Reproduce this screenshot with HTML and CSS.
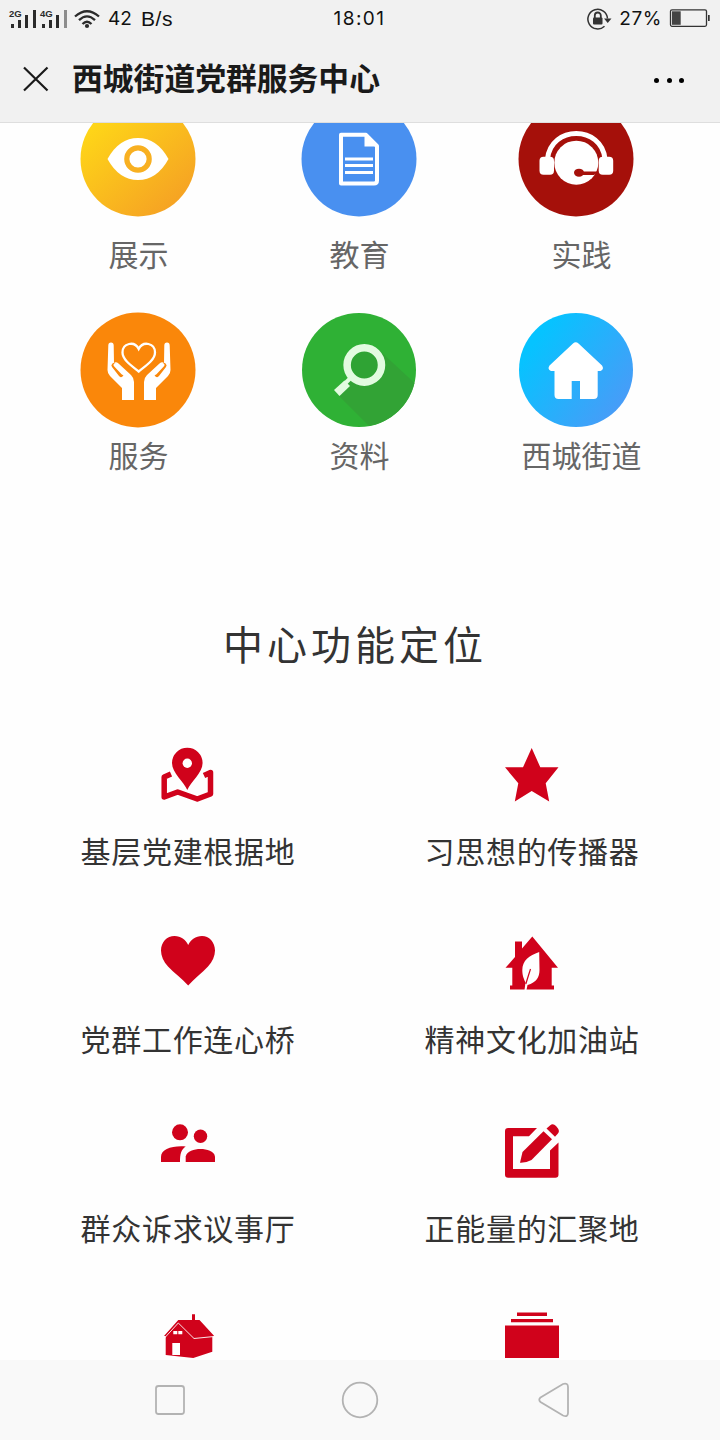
FILE: index.html
```
<!DOCTYPE html>
<html lang="zh-CN">

<head>
    <meta charset="UTF-8">
    <meta name="viewport" content="width=device-width, initial-scale=1.0">
    <title>西城街道党群服务中心</title>
    <link rel="stylesheet" href="styles.css">
</head>

<body>
    <div class="status-bar">
        <div class="status-left">
            <svg class="signal" width="92" height="22" viewBox="0 0 92 22">
                <g fill="#2b2b2b">
                    <text x="0" y="9" class="net">2G</text>
                    <rect x="2" y="16" width="3" height="4" />
                    <rect x="9" y="12" width="3" height="8" />
                    <rect x="16" y="7" width="3" height="13" />
                    <rect x="24" y="2" width="3" height="18" />
                    <text x="31" y="9" class="net">4G</text>
                    <rect x="33" y="16" width="3" height="4" />
                    <rect x="40" y="12" width="3" height="8" />
                    <rect x="47" y="7" width="3" height="13" />
                    <rect x="55" y="2" width="3" height="18" fill="#8d8d8d" />
                </g>
                <g fill="none" stroke="#2b2b2b" stroke-width="2.3">
                    <path d="M66 8.500Q78 -2 90 8.500" />
                    <path d="M70 12.200Q78 4.500 86 12.200" />
                    <path d="M73.500 16Q78 11.500 82.500 16" />
                </g>
                <circle cx="78" cy="18" r="2.100" fill="#2b2b2b" />
            </svg>
            <span class="speed">42</span>
            <span class="unit">B/s</span>
        </div>
        <span class="clock">18:01</span>
        <div class="status-right">
            <svg width="25" height="22" viewBox="0 0 25 22">
                <path d="M17.500 18.200A9.800 9.800 0 1 1 20.500 10.500" fill="none" stroke="#333" stroke-width="1.500" />
                <path d="M17 10.500h7.500L20.700 15z" fill="#333" />
                <rect x="6" y="9.500" width="9.500" height="7" rx="1" fill="#333" />
                <path d="M7.800 10V7.500a3 3 0 0 1 6 0V10" fill="none" stroke="#333" stroke-width="1.800" />
            </svg>
            <span class="percent">27%</span>
            <svg width="41" height="19" viewBox="0 0 41 19">
                <rect x="1.500" y=".800" width="36" height="16.500" rx="1.500" fill="none" stroke="#333" stroke-width="1.300" />
                <rect x="3" y="2.300" width="8.700" height="13.500" fill="#444" />
                <rect x="39" y="6" width="1.700" height="6" fill="#333" />
            </svg>
        </div>
    </div>

    <header class="title-bar">
        <svg class="close" width="26" height="26" viewBox="0 0 26 26">
            <path d="M1 1.500l23.500 23M24.500 1.500l-23.500 23" stroke="#1a1a1a" stroke-width="2.200" />
        </svg>
        <h1>西城街道党群服务中心</h1>
        <div class="more"><i></i><i></i><i></i></div>
    </header>

    <main class="content">
        <div class="menu">
            <div class="menu-item">
                <svg viewBox="0 0 116 116">
                    <defs>
                        <linearGradient id="yellow" x1="0.100" y1="0.100" x2="0.850" y2="0.950">
                            <stop offset="0" stop-color="#ffda17" />
                            <stop offset="1" stop-color="#f5a024" />
                        </linearGradient>
                    </defs>
                    <circle cx="58" cy="58" r="57.500" fill="url(#yellow)" />
                    <path d="M27.500 58Q39 37 58 37T88.500 58Q77 79 58 79T27.500 58z" fill="#fff" />
                    <circle cx="58" cy="58" r="11.200" fill="none" stroke="#f8b021" stroke-width="5.200" />
                </svg>
                <span>展示</span>
            </div>
            <div class="menu-item">
                <svg viewBox="0 0 116 116">
                    <circle cx="58" cy="58" r="57.500" fill="#4990f0" />
                    <path d="M40 33.800h25L76 45v34.500q0 3-3 3H40z" fill="none" stroke="#fff" stroke-width="4" stroke-linejoin="round" />
                    <path d="M63.500 33L77 45.500H63.500z" fill="#fff" />
                    <path d="M44 58h28M44 64.500h28M44 71.500h28" stroke="#fff" stroke-width="3" />
                </svg>
                <span>教育</span>
            </div>
            <div class="menu-item shifted">
                <svg viewBox="0 0 116 116">
                    <circle cx="58" cy="58" r="57.500" fill="#a5100a" />
                    <path d="M29.500 58C33 24 83.500 24 87 58" fill="none" stroke="#fff" stroke-width="5" />
                    <circle cx="58.300" cy="61.700" r="22" fill="#fff" />
                    <rect x="21.500" y="55.700" width="14.500" height="18" rx="4" fill="#fff" />
                    <rect x="80.700" y="55.700" width="14.500" height="18" rx="4" fill="#fff" />
                    <ellipse cx="61" cy="71.700" rx="5" ry="4" fill="#a5100a" />
                    <path d="M61 70.500H80.500L76 74H61z" fill="#a5100a" />
                </svg>
                <span>实践</span>
            </div>
            <div class="menu-item">
                <svg viewBox="0 0 116 116">
                    <circle cx="58" cy="58" r="57.500" fill="#fa870a" />
                    <path d="M58.700 59.500C52 54 42.500 48 42.500 40.500C42.500 31 54.500 28.500 58.700 37C63 28.500 75 31 75 40.500C75 48 65.500 54 58.700 59.500z" fill="none" stroke="#fff" stroke-width="2.300" />
                    <g id="hand" fill="#fff">
                        <path d="M31 30.500q2.700 0 2.700 3L34 51q2-1.500 4.500 .500L51 63q3 3 3 7V88H42V76L30 64q-2.500-2.500-2.500-6L28.300 33.500q0-3 2.700-3z" />
                        <path d="M34 53.500L41 62.500" stroke="#fa870a" stroke-width="5" stroke-linecap="round" />
                        <path d="M35.500 53L43 61" stroke="#fff" stroke-width="4" stroke-linecap="round" />
                    </g>
                    <use href="#hand" transform="translate(118 0) scale(-1 1)" />
                </svg>
                <span>服务</span>
            </div>
            <div class="menu-item">
                <svg viewBox="0 0 116 116">
                    <circle cx="58" cy="58" r="57" fill="#2fb135" />
                    <path d="M78 38L113.500 71A57 57 0 0 1 68 114L38 84L50 68z" fill="#32a335" />
                    <circle cx="63.300" cy="53" r="13.500" fill="#2fa334" />
                    <circle cx="63.300" cy="53" r="17.200" fill="none" stroke="#e2fbe0" stroke-width="7.500" />
                    <path d="M50 65.500L44 71.500" stroke="#e2fbe0" stroke-width="4" />
                    <path d="M43.500 68.500L49 74L38.500 84L33 78z" fill="#e2fbe0" />
                </svg>
                <span>资料</span>
            </div>
            <div class="menu-item shifted">
                <svg viewBox="0 0 116 116">
                    <defs>
                        <linearGradient id="blue" x1="0.100" y1="0.300" x2="0.850" y2="0.850">
                            <stop offset="0" stop-color="#06c3ff" />
                            <stop offset="1" stop-color="#469df8" />
                        </linearGradient>
                    </defs>
                    <circle cx="58" cy="58" r="57" fill="url(#blue)" />
                    <path d="M55 31.500q2.700-2.500 5.500 0L84 53.500q2.500 3.500-1.500 5.500H79.700V83q0 4-4 4H62V69h-8.300V87H40.500q-4 0-4-4V59H33q-4-2-1.500-5.500z" fill="#fff" />
                </svg>
                <span>西城街道</span>
            </div>
        </div>

        <h2>中心功能定位</h2>

        <div class="features">
            <div class="feature">
                <svg viewBox="0 0 54 54">
                    <path d="M10 26L3.200 29V49L16.700 44L36.300 51L49.500 46V24.500L43 27.500" fill="none" stroke="#d0021b" stroke-width="5.500" stroke-linejoin="round" />
                    <path d="M26.300 42C23 34 11 25 11 15A15.300 15.300 0 0 1 41.600 15C41.600 25 29.600 34 26.300 42z" fill="#d0021b" stroke="#fff" stroke-width="2" paint-order="stroke" />
                    <circle cx="26.300" cy="15.300" r="4.700" fill="#fff" />
                </svg>
                <span>基层党建根据地</span>
            </div>
            <div class="feature">
                <svg viewBox="0 0 54 54">
                    <path d="M26.700 0L35.300 19.300H53.500L40.700 35.300L44.200 53.500L26.700 43L9.800 53.500L13.300 35.300L0 19.300H18z" />
                </svg>
                <span>习思想的传播器</span>
            </div>
            <div class="feature">
                <svg viewBox="0 0 54 54">
                    <path d="M27.200 49.500C21 42.500 13 37 7 30.500C2.500 25.500 0 20 0 14.500C0 6 6 0 13.500 0C20 0 24.500 3.500 27.200 9C30 3.500 34.500 0 41 0C48 0 54 6 54 14.500C54 20 51.500 25.500 47 30.500C41 37 33.500 42.500 27.200 49.500z" />
                </svg>
                <span>党群工作连心桥</span>
            </div>
            <div class="feature">
                <svg viewBox="0 0 54 54">
                    <path d="M27.300 .500L53 31.800H46.700V49.500H49V53.500H5V49.500H7.300V31.800H.500L10 21V5.500H17V12.500z" />
                    <path d="M34.200 16C24 19.500 17.500 24.500 17.300 34C17.300 40 19 43 20.500 46.500L19.500 54H21.500L22.500 49C31.500 46.500 34.500 41 34.500 34z" fill="#fff" />
                    <path d="M25.500 33L20.800 48" stroke="#d0021b" stroke-width="1.200" />
                </svg>
                <span>精神文化加油站</span>
            </div>
            <div class="feature">
                <svg viewBox="0 0 54 54">
                    <circle cx="19" cy="7.300" r="8" />
                    <circle cx="39.500" cy="11.300" r="6.700" />
                    <path d="M0 37V32C0 24 11 20.500 24.700 21.500C20 25 19 29 19 37z" />
                    <path d="M24.700 37V31.500C26 26 33 24 39.500 24S53 26 54 31.500V37z" />
                </svg>
                <span>群众诉求议事厅</span>
            </div>
            <div class="feature">
                <svg viewBox="0 0 54 54">
                    <path d="M32 3L24 11.300H8V44H45V25.500L53.500 17.500V49.500q0 3.200-3.200 3.200H3.200Q0 52.700 0 49.500V6.200Q0 3 3.200 3z" />
                    <path d="M15 37.700L17.500 27L38.500 6.300L47 14.300L26.500 35Q21 38 15 37.700z" />
                    <path d="M41.500 3.500L45 .500Q48 -2 51 1L53 3.500Q55 6.500 52.500 9L50 11.700z" />
                </svg>
                <span>正能量的汇聚地</span>
            </div>
            <div class="feature">
                <svg viewBox="0 0 54 54">
                    <path d="M3 23L17.300 7H31V1.300H34V7H38.500L53 22.700L51.300 24V38.700L32.300 45L4.700 42V23z" />
                    <path d="M3.500 25L17.300 10L33 25.500L53 23.500" fill="none" stroke="#fff" stroke-width=".900" />
                    <path d="M12.300 18h4v3.300h-4zM17.300 18h4v3.300h-4zM11.300 30H19V42H11.300z" fill="#fff" />
                </svg>
            </div>
            <div class="feature">
                <svg viewBox="0 0 54 54">
                    <path d="M12 -.500H42V3H12zM6 6H48V9.300H6zM0 12.500H54V45H0z" />
                </svg>
            </div>
        </div>
    </main>

    <nav class="nav-bar">
        <svg viewBox="0 0 40 40">
            <rect x="6" y="6" width="28" height="28" rx="2.500" />
        </svg>
        <svg viewBox="0 0 40 40">
            <circle cx="20" cy="20" r="17.300" />
        </svg>
        <svg viewBox="0 0 40 40">
            <path d="M10.500 17.500L33 4Q38 2.500 38 7V33Q38 37.500 33 35.500L10.500 22Q8 19.800 10.500 17.500z" />
        </svg>
    </nav>
</body>

</html>
```

FILE: styles.css
```
* {
    box-sizing: border-box;
}

body {
    font-family: "Liberation Sans", "Noto Sans CJK SC", sans-serif;
    background-color: #fefefe;
    display: flex;
    flex-direction: column;
    height: 1440px;
    margin: 0;
    overflow: hidden;
}

svg {
    display: block;
    overflow: visible;
}

.status-bar {
    display: grid;
    grid-template-columns: 1fr auto 1fr;
    align-items: center;
    height: 36px;
    padding: 0 10px 0 9px;
    background-color: #f1f1f1;
    color: #111;
    font-family: Inter, "Liberation Sans", sans-serif;
    font-size: 19px;
    line-height: 36px;
}

.status-left,
.status-right {
    display: flex;
    align-items: center;
}

.status-right {
    justify-content: flex-end;
}

.net {
    font-family: "Liberation Sans", sans-serif;
    font-size: 9.5px;
    font-weight: bold;
}

.clock {
    padding-top: 1px;
    letter-spacing: 1.5px;
}

.speed {
    margin-left: 7px;
}

.unit {
    margin-left: 9px;
    font-family: "Liberation Sans", sans-serif;
    font-size: 21px;
    letter-spacing: 0.6px;
}

.percent {
    margin: 0 7px 0 7px;
    letter-spacing: 0.6px;
}

.title-bar {
    display: flex;
    align-items: center;
    flex-shrink: 0;
    height: 87px;
    padding: 0 36px 0 23px;
    background-color: #f1f1f1;
    border-bottom: 1px solid #dedede;
}

.title-bar h1 {
    margin: 2px auto 0 23px;
    color: #1a1a1a;
    font-size: 30.8px;
    font-weight: bold;
    line-height: 40px;
}

.more {
    display: flex;
    gap: 7.500px;
    padding-top: 2px;
}

.more i {
    width: 5px;
    height: 5px;
    border-radius: 50%;
    background-color: #000;
}

.content {
    flex: 1;
    overflow: hidden;
}

.menu {
    display: grid;
    grid-template-columns: repeat(3, 221px);
    margin: -22px 0 0 28px;
}

.menu-item {
    display: flex;
    flex-direction: column;
    align-items: center;
    height: 211px;
    color: #666;
    font-size: 30px;
    line-height: 40px;
}

.menu-item svg {
    width: 116px;
    height: 116px;
    margin-right: 1px;
}

.menu-item span {
    margin-top: 19px;
}

.menu-item:nth-child(n+4) span {
    margin-top: 9px;
}

.menu-item.shifted svg {
    margin-right: 9px;
}

.menu-item.shifted span {
    margin-left: 2px;
}

h2 {
    margin: 96px 0 0;
    color: #333;
    font-size: 40px;
    font-weight: normal;
    letter-spacing: 4px;
    line-height: 54px;
    text-indent: -10px;
    text-align: center;
}

.features {
    display: grid;
    grid-template-columns: repeat(2, 344px);
    grid-auto-rows: 188.4px;
    justify-content: center;
    margin-top: 75px;
}

.feature {
    display: flex;
    flex-direction: column;
    align-items: center;
    color: #333;
    font-size: 30px;
    letter-spacing: 0.7px;
    line-height: 40px;
}

.feature svg {
    width: 54px;
    height: 54px;
    margin-bottom: 31px;
    fill: #d0021b;
}

.nav-bar {
    display: flex;
    justify-content: center;
    align-items: center;
    gap: 150px;
    flex-shrink: 0;
    height: 80px;
    background-color: #f9f9f9;
}

.nav-bar svg {
    width: 40px;
    height: 40px;
    fill: none;
    stroke: #b3b3b3;
    stroke-width: 1.8;
}
```
